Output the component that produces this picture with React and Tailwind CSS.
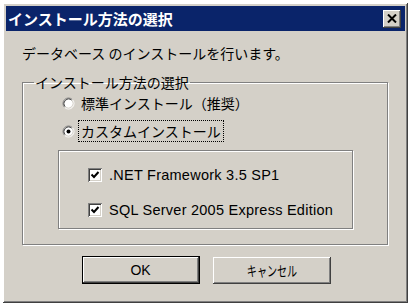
import React from 'react'

const jp = "font-['Noto_Sans_CJK_JP',sans-serif]"
const latin = "font-['Liberation_Sans','Noto_Sans_CJK_JP',sans-serif]"

const raised = 'shadow-[inset_-1px_-1px_#404040,inset_1px_1px_#ffffff,inset_-2px_-2px_#808080,inset_2px_2px_#d4d0c8]'
const sunken = 'shadow-[inset_1px_1px_#808080,inset_-1px_-1px_#ffffff,inset_2px_2px_#404040,inset_-2px_-2px_#d4d0c8]'
const etched = 'border border-[#808080] shadow-[inset_1px_1px_0_#ffffff,1px_1px_0_#ffffff]'

const Radio = ({ checked }) => (
  <svg width="13" height="13" viewBox="0 0 13 13" className="shrink-0">
    <circle cx="6.5" cy="6.5" r="5" fill="#fff" />
    <path d="M2.61 10.39 A5.5 5.5 0 0 1 10.39 2.61" stroke="#808080" fill="none" />
    <path d="M10.39 2.61 A5.5 5.5 0 0 1 2.61 10.39" stroke="#ffffff" fill="none" />
    <path d="M3.32 9.68 A4.5 4.5 0 0 1 9.68 3.32" stroke="#404040" fill="none" />
    <path d="M9.68 3.32 A4.5 4.5 0 0 1 3.32 9.68" stroke="#d4d0c8" fill="none" />
    {checked && <circle cx="6.5" cy="6.5" r="2" fill="#000" />}
  </svg>
)

const Check = () => (
  <div className={`w-[14px] h-[14px] bg-white shrink-0 flex items-center justify-center ${sunken}`}>
    <svg width="14" height="14" viewBox="0 0 14 14">
      <polyline points="3.5,6.5 6,9 10.5,4" stroke="#000" strokeWidth="2" fill="none" />
    </svg>
  </div>
)

export default function App() {
  return (
    <div className="w-[412px] h-[307px] bg-white pt-[3px] pl-[3px]">
      <div className={`w-[405px] h-[300px] bg-[#d4d0c8] p-[3px] flex flex-col ${raised}`}>
        {/* title bar */}
        <div className="h-[25px] bg-[#0a246a] flex items-center justify-between pl-[2px] pr-[4px]">
          <span className={`${jp} text-[15px] leading-[25px] font-bold text-white`}>インストール方法の選択</span>
          <div className={`w-[18px] h-[18px] bg-[#d4d0c8] flex items-center justify-center ${raised}`}>
            <svg width="10" height="9" viewBox="0 0 10 9">
              <path d="M1 0.5 L9 8.5 M9 0.5 L1 8.5" stroke="#000" strokeWidth="2" />
            </svg>
          </div>
        </div>

        {/* body */}
        <div className={`${jp} text-[14px] text-black flex flex-col pl-[16px]`}>
          <p className="mt-[13px] leading-[18px]">データベース のインストールを行います。</p>

          <fieldset className={`mt-[11px] w-[366px] ${etched} pb-[15px]`}>
            <legend className="ml-[11px] px-[1px] leading-[18px]">インストール方法の選択</legend>

            <div className="mt-[1px] h-[22px] flex items-center pl-[39px] gap-[4px]">
              <Radio />
              <span className="px-[2px]">標準インストール（推奨）</span>
            </div>
            <div className="mt-[6px] h-[22px] flex items-center pl-[39px] gap-[3px]">
              <Radio checked />
              <span className="h-[22px] flex items-center px-[2px] border border-dotted border-black">カスタムインストール</span>
            </div>

            <div className={`mt-[8px] ml-[35px] w-[295px] h-[79px] ${etched} flex flex-col pl-[29px]`}>
              <div className="mt-[15px] flex items-center gap-[7px]">
                <Check />
                <span className={`${latin} text-[14.5px] tracking-[0.25px] leading-[18px]`}>.NET Framework 3.5 SP1</span>
              </div>
              <div className="mt-[17px] flex items-center gap-[7px]">
                <Check />
                <span className={`${latin} text-[14.5px] tracking-[0.25px] leading-[18px]`}>SQL Server 2005 Express Edition</span>
              </div>
            </div>
          </fieldset>
        </div>

        {/* buttons */}
        <div className="mt-[11px] flex justify-center gap-[13px] pl-[1px]">
          <button className={`w-[118px] h-[28px] border border-black bg-[#d4d0c8] ${raised} ${latin} text-[14px]`}>OK</button>
          <button className={`w-[118px] h-[27px] mt-[1px] bg-[#d4d0c8] ${raised} ${jp} text-[14px]`}>
            <span className="inline-block scale-x-[0.72]">キャンセル</span>
          </button>
        </div>
      </div>
    </div>
  )
}
